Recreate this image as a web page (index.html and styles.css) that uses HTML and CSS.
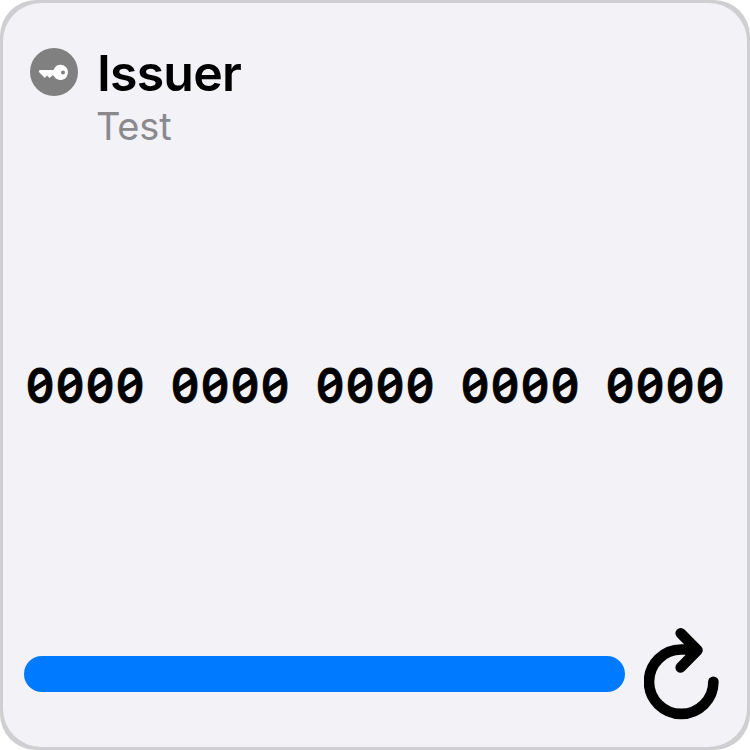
FILE: index.html
```html
<!DOCTYPE html>
<html lang="en">
<head>
<meta charset="utf-8">
<title>Issuer</title>
<link rel="stylesheet" href="styles.css">
</head>
<body>
<main class="card">
  <header class="header">
    <svg class="key" viewBox="0 0 48 48" aria-hidden="true">
      <circle cx="24" cy="24" r="24" fill="#808080"/>
      <path fill="#fff" fill-rule="evenodd" d="M30.8 16.8a7.6 7.6 0 1 1-7.3 10.8h-1.2l-2.7 2.4-2.6-2.4-2.2 2.3-2.4-2.4-3-3a1.4 1.4 0 0 1 1-2.5h13.2a7.6 7.6 0 0 1 7.2-5.2ZM33 22.4a2 2 0 1 0 0 4 2 2 0 0 0 0-4Z"/>
    </svg>
    <div class="titles">
      <h1 class="issuer">Issuer</h1>
      <p class="account">Test</p>
    </div>
  </header>
  <div class="code">
    <span class="group"><span>0</span><span>0</span><span>0</span><span>0</span></span>
    <span class="group"><span>0</span><span>0</span><span>0</span><span>0</span></span>
    <span class="group"><span>0</span><span>0</span><span>0</span><span>0</span></span>
    <span class="group"><span>0</span><span>0</span><span>0</span><span>0</span></span>
    <span class="group"><span>0</span><span>0</span><span>0</span><span>0</span></span>
  </div>
  <footer class="footer">
    <div class="progress"></div>
    <svg class="refresh" viewBox="0 0 76 92" aria-hidden="true">
      <path d="M69.4 53.7a32.2 32.2 0 1 1-32.2-32.2h15M36.7 5.3l16.8 17-16.8 17.1" fill="none" stroke="#000" stroke-width="10.6" stroke-linecap="round" stroke-linejoin="round"/>
    </svg>
  </footer>
</main>
</body>
</html>
```
FILE: styles.css
```css
* { box-sizing: border-box; }
body {
  margin: 0;
  background: #fff;
  font-family: Inter, "Liberation Sans", sans-serif;
}
.card {
  display: flex;
  flex-direction: column;
  justify-content: space-between;
  position: relative;
  isolation: isolate;
  width: 750px;
  height: 750px;
  padding: 48px 27px 30px 24px;
  border-radius: 36px;
  background: #cfcfd1;
}
.card::before {
  content: "";
  position: absolute;
  inset: 3px;
  z-index: -1;
  border-radius: 38px;
  background: #f2f2f7;
}
.header {
  display: flex;
  gap: 18px;
  padding-left: 6px;
  height: 95px;
}
.key { width: 48px; height: 48px; }
.issuer {
  margin: 0;
  padding-left: 1px;
  font-size: 50px;
  line-height: 50px;
  font-weight: 600;
  letter-spacing: -0.8px;
}
.account {
  margin: 5px 0 0;
  font-size: 38px;
  line-height: 46px;
  letter-spacing: -0.2px;
  color: #8a8a8e;
}
.code {
  display: flex;
  gap: 25px;
  padding-left: 1px;
  font-size: 48px;
  line-height: 60px;
  font-weight: 600;
}
.group { display: flex; }
/* Condensed digits with a short diagonal inside the counter */
.group span {
  position: relative;
  display: flex;
  justify-content: center;
  width: 30px;
  transform: scaleX(0.89);
  -webkit-text-stroke: 0.8px #000;
}
.group span::after {
  content: "";
  position: absolute;
  left: 6px;
  top: 27.5px;
  width: 18px;
  height: 4.8px;
  background: #000;
  transform: rotate(-30deg);
}
.footer {
  display: flex;
  align-items: center;
  gap: 19px;
  height: 92px;
}
.progress {
  width: 601px;
  height: 36px;
  border-radius: 18px;
  background: #007aff;
}
.refresh { width: 76px; height: 92px; flex: none; }
```
